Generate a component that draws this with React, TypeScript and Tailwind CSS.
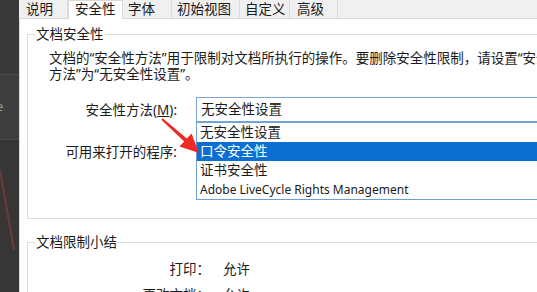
import React from "react";

const CJK = "'Noto Sans', 'Noto Sans CJK SC', sans-serif";

function Tab({ label, w, pl, active }: { label: string; w: string; pl: string; active?: boolean }) {
  return (
    <div
      className={
        active
          ? `relative z-10 -mb-px flex h-[19px] items-start ${w} ${pl} border-x border-t border-[#d9d9d9] bg-white pt-[1px] text-[13.5px] leading-[15px] whitespace-nowrap`
          : `flex h-[18px] items-center ${w} ${pl} border-r border-[#dcdcdc] bg-[#f0f0f0] text-[13.5px] leading-[15px] whitespace-nowrap`
      }
    >
      {label}
    </div>
  );
}

export default function App() {
  return (
    <div
      className="flex h-[292px] w-[537px] overflow-hidden bg-[#f0f0f0] text-[#1b1b1b]"
      style={{ fontFamily: CJK }}
    >
      {/* left dark strip (another window) */}
      <div className="relative flex w-[19px] shrink-0 flex-col overflow-hidden bg-[#393939]">
        <div className="h-[75px] border-b border-[#4a4a4a]" />
        <div className="flex h-[65px] items-center border-b border-[#4a4a4a] bg-[#3e3e3e] text-[13px] text-[#9a9a9a]">
          <span className="-ml-[4px]">e</span>
        </div>
        <div className="flex-1 bg-[#363636]" />
        <svg className="absolute left-0 top-[170px]" width="19" height="90" viewBox="0 0 19 90">
          <path d="M0 0 L14 80" stroke="#6b3a3a" strokeWidth="2" fill="none" />
        </svg>
      </div>

      {/* dialog */}
      <div className="flex flex-1 flex-col">
        {/* tabs */}
        <div className="flex h-[18px] shrink-0 items-start">
          <Tab label="说明" w="w-[49px]" pl="pl-[7px]" />
          <Tab label="安全性" w="w-[55px]" pl="pl-[6px]" active />
          <Tab label="字体" w="w-[49px]" pl="pl-[5px]" />
          <Tab label="初始视图" w="w-[68px]" pl="pl-[5px]" />
          <Tab label="自定义" w="w-[50px]" pl="pl-[5px]" />
          <Tab label="高级" w="w-[48px]" pl="pl-[7px]" />
          <div className="h-[18px] flex-1" />
        </div>

        {/* panel */}
        <div className="relative flex-1 border-l border-t border-[#d9d9d9] bg-white pl-[7px]">
          {/* group 1 */}
          <fieldset className="mt-[7px] h-[193px] w-[560px] border border-[#dcdcdc] px-0">
            <legend className="ml-[7px] px-[1px] text-[13.5px] leading-[16px]">文档安全性</legend>
            <div className="mt-[8px] pl-[21px] text-[13.5px] leading-[16px] whitespace-nowrap">
              <div>文档的“安全性方法”用于限制对文档所执行的操作。要删除安全性限制，请设置“安全性</div>
              <div>方法”为“无安全性设置”。</div>
            </div>

            <div className="mt-[15px] flex items-center">
              <div className="w-[149px] text-right text-[13.5px] leading-[16px] whitespace-nowrap">
                安全性方法(<span className="underline">M</span>):
              </div>
              <div className="relative ml-[19px]">
                <div className="flex h-[25px] w-[400px] items-center border border-[#7aa7d9] bg-white pl-[4px] text-[13.5px]">
                  无安全性设置
                </div>
                {/* dropdown list */}
                <div className="absolute left-0 top-[25px] z-20 w-[400px] border border-[#6f9fd6] bg-white text-[13.5px] leading-[19px]">
                  <div className="h-[19px] pl-[3px]">无安全性设置</div>
                  <div className="h-[19px] bg-[#0a6fd1] pl-[3px] text-white">口令安全性</div>
                  <div className="h-[19px] pl-[3px]">证书安全性</div>
                  <div className="h-[19px] pl-[3px] text-[12px]" style={{ fontFamily: "'Noto Sans', sans-serif" }}>
                    Adobe LiveCycle Rights Management
                  </div>
                </div>
              </div>
            </div>

            <div className="mt-[17px] flex h-[25px] items-center">
              <div className="w-[149px] text-right text-[13.5px] leading-[16px] whitespace-nowrap">可用来打开的程序:</div>
            </div>
          </fieldset>

          {/* group 2 */}
          <fieldset className="mt-[15px] h-[120px] w-[560px] border border-[#dcdcdc] px-0">
            <legend className="ml-[7px] px-[1px] text-[13.5px] leading-[16px]">文档限制小结</legend>
            <div className="mt-[11px] flex text-[13.5px] leading-[16px]">
              <div className="w-[182px] text-right">打印：</div>
              <div className="ml-[13px]">允许</div>
            </div>
            <div className="mt-[10px] flex text-[13.5px] leading-[16px]">
              <div className="w-[182px] text-right">更改文档：</div>
              <div className="ml-[13px]">允许</div>
            </div>
          </fieldset>

          {/* red annotation arrow */}
          <svg className="pointer-events-none absolute left-[140px] top-[98px] z-30" width="60" height="60" viewBox="-2 -2 60 60">
            <path d="M0.7 -0.7 L24.8 19.5 L29.5 14.5 L37 34 L17.5 27.5 L22.2 22.5 L-0.7 0.7 Z" fill="#ee2a24" />
          </svg>
        </div>
      </div>
    </div>
  );
}
